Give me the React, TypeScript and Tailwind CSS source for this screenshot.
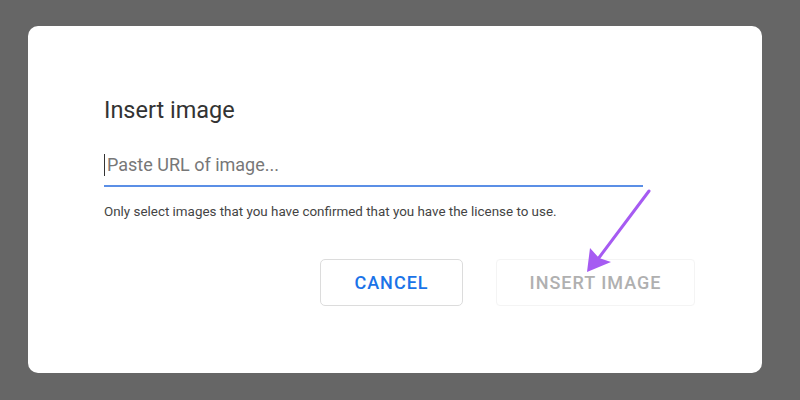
export default function App() {
  return (
    <div className="h-[400px] w-[800px] bg-[#666666] pl-[28px] pt-[26px] font-['Roboto',sans-serif]">
      <div className="relative h-[347px] w-[734px] rounded-[10px] bg-white pl-[76px] pt-[66px]">
        <h1 className="text-[23.5px] leading-[36px] text-[#333333]">Insert image</h1>

        <div className="mt-[25px] w-[539px] border-b-2 border-[#5b8fe6] pb-[8px]">
          <div className="flex items-center">
            <span className="h-[22px] w-px bg-[#333333]" />
            <span className="ml-[2px] text-[18px] leading-[24px] text-[#777777]">Paste URL of image...</span>
          </div>
        </div>

        <p className="mt-[17px] text-[13.4px] leading-[16px] text-[#444444]">
          Only select images that you have confirmed that you have the license to use.
        </p>

        <div className="mt-[39px] flex gap-[33px] pl-[216px]">
          <button className="h-[47px] w-[143px] rounded-[5px] border border-[#dcdcdc] text-[18px] font-medium tracking-[1px] text-[#1a73e8]">
            CANCEL
          </button>
          <button className="h-[47px] w-[199px] rounded-[4px] border border-[#f4f4f4] text-[18px] font-medium tracking-[1px] text-[#b0b0b0]">
            INSERT IMAGE
          </button>
        </div>

        <svg className="absolute left-[550px] top-[160px]" width="80" height="100" viewBox="550 160 80 100">
          <path d="M 621 165 L 570 233" stroke="#a65bf2" strokeWidth="3" strokeLinecap="round" fill="none" />
          <path d="M 559 246 L 562 222 L 571 232 L 583 236 Z" fill="#a65bf2" />
        </svg>
      </div>
    </div>
  );
}
